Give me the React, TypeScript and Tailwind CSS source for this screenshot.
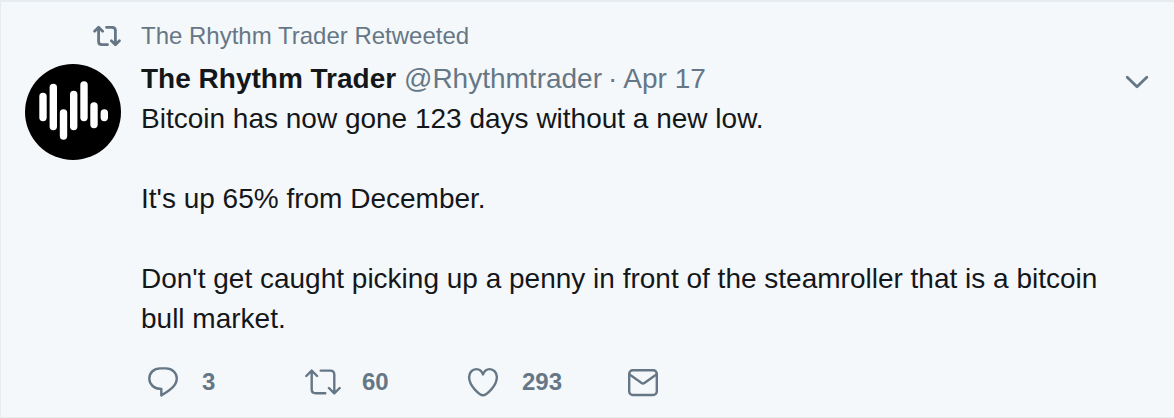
import type { ReactNode } from 'react';

const BARS = [
  { x: 18, top: 32.5, bottom: 53.5 },
  { x: 28.3, top: 23.5, bottom: 62.5 },
  { x: 38.5, top: 49, bottom: 72 },
  { x: 48.7, top: 30.5, bottom: 62.5 },
  { x: 59, top: 21, bottom: 53.5 },
  { x: 69, top: 42, bottom: 60.5 },
  { x: 79.3, top: 49, bottom: 53.5 },
];

function Avatar() {
  return (
    <svg viewBox="0 0 96 96" className="block size-24" role="img" aria-label="The Rhythm Trader">
      <circle cx="48" cy="48" r="48" fill="#000" />
      <g stroke="#fff" strokeWidth="7.4" strokeLinecap="round">
        {BARS.map((bar) => (
          <line key={bar.x} x1={bar.x} x2={bar.x} y1={bar.top} y2={bar.bottom} />
        ))}
      </g>
    </svg>
  );
}

const strokeProps = {
  fill: 'none',
  stroke: 'currentColor',
  strokeLinecap: 'round',
  strokeLinejoin: 'round',
  'aria-hidden': true,
} as const;

function RetweetSmallIcon() {
  return (
    <svg viewBox="0 0 28 22" className="h-[22px] w-7" strokeWidth="2.8" {...strokeProps}>
      <path d="M1.6 6.3 5.6 2.3 9.6 6.3M5.6 3V16.5Q5.6 19.7 8.8 19.7H14.5" />
      <path d="M26.4 15.7 22.4 19.7 18.4 15.7M22.4 19V5.5Q22.4 2.3 19.2 2.3H13.5" />
    </svg>
  );
}

function RetweetIcon() {
  return (
    <svg viewBox="0 0 36 26" className="h-[26px] w-9" strokeWidth="2.4" {...strokeProps}>
      <path d="M1.3 7 6.7 1.6 12.1 7M6.7 2V20.2Q6.7 24.2 10.7 24.2H20.3" />
      <path d="M34.7 19 29.3 24.4 23.9 19M29.3 24V5.6Q29.3 1.6 25.3 1.6H15.7" />
    </svg>
  );
}

function ReplyIcon() {
  return (
    <svg viewBox="0 0 32 32" className="size-8" strokeWidth="2.4" {...strokeProps}>
      <path d="M14.3 22.9C7.2 22.9 2.3 18.6 2.3 12.6 2.3 6.6 7 2.4 13.2 2.4H18.8C25.2 2.4 29.8 6.7 29.8 12.6 29.8 17.6 26.7 21.2 22.2 24.2 19.8 25.9 17.2 27.5 14.3 29.4Z" />
    </svg>
  );
}

function HeartIcon() {
  return (
    <svg viewBox="0 0 32 32" className="size-8" strokeWidth="2.4" {...strokeProps}>
      <path d="M16 29.2C12.9 29.2 2.1 20.3 2.1 11 2.1 6.4 5.4 3.1 9.4 3.1 12.5 3.1 14.8 5 16 8.4 17.2 5 19.5 3.1 22.6 3.1 26.6 3.1 29.9 6.4 29.9 11 29.9 20.3 19.1 29.2 16 29.2Z" />
    </svg>
  );
}

function MailIcon() {
  return (
    <svg viewBox="0 0 32 32" className="size-8" strokeWidth="2.4" {...strokeProps}>
      <rect x="2.2" y="4.2" width="27.6" height="24.8" rx="3.6" />
      <path d="M2.6 8.6 14.6 17Q16 18 17.4 17L29.4 8.6" />
    </svg>
  );
}

function ChevronIcon() {
  return (
    <svg viewBox="0 0 24 14" className="h-[14px] w-6" strokeWidth="2.8" {...strokeProps}>
      <path d="M2.2 2.2 12 11.8 21.8 2.2" />
    </svg>
  );
}

function Action({ label, count, children }: { label: string; count?: number; children: ReactNode }) {
  return (
    <button type="button" aria-label={label} className="flex w-40 items-center">
      <span className="flex w-9 shrink-0 justify-center">{children}</span>
      {count !== undefined && <span className="ml-[21px] text-2xl leading-8 font-bold">{count}</span>}
    </button>
  );
}

export default function App() {
  return (
    <article className="border-t-2 border-b border-l border-[#e6ecf0] bg-[#f5f8fa] pt-[18px] pr-[25px] pb-[19px] pl-6 font-['Liberation_Sans',Arial,sans-serif] text-[#14171a]">
      <div className="grid grid-cols-[96px_minmax(0,1fr)] gap-x-5">
        <div className="flex items-center justify-end text-[#657786]">
          <RetweetSmallIcon />
        </div>
        <a href="#retweeter" className="justify-self-start text-2xl leading-8 text-[#657786]">
          The Rhythm Trader Retweeted
        </a>

        <a href="#profile" className="mt-3 self-start">
          <Avatar />
        </a>
        <div className="pt-[7px]">
          <header className="flex items-center justify-between">
            <div className="text-[28px] leading-10 whitespace-nowrap text-[#657786]">
              <a href="#profile" className="font-bold text-[#14171a]">The Rhythm Trader</a>{' '}
              <a href="#profile">@Rhythmtrader</a>
              <span className="mx-1.5">·</span>
              <a href="#status">Apr 17</a>
            </div>
            <button type="button" aria-label="More options" className="mt-[6px] text-[#657786]">
              <ChevronIcon />
            </button>
          </header>
          <div className="pr-4 text-[28px] leading-10">
            <p>Bitcoin has now gone 123 days without a new low.</p>
            <p className="mt-10">It's up 65% from December.</p>
            <p className="mt-10">
              Don't get caught picking up a penny in front of the steamroller that is a bitcoin bull market.
            </p>
          </div>
          <footer className="mt-[27px] ml-1 flex text-[#657786]">
            <Action label="Reply" count={3}><ReplyIcon /></Action>
            <Action label="Retweet" count={60}><RetweetIcon /></Action>
            <Action label="Like" count={293}><HeartIcon /></Action>
            <Action label="Direct message"><MailIcon /></Action>
          </footer>
        </div>
      </div>
    </article>
  );
}
